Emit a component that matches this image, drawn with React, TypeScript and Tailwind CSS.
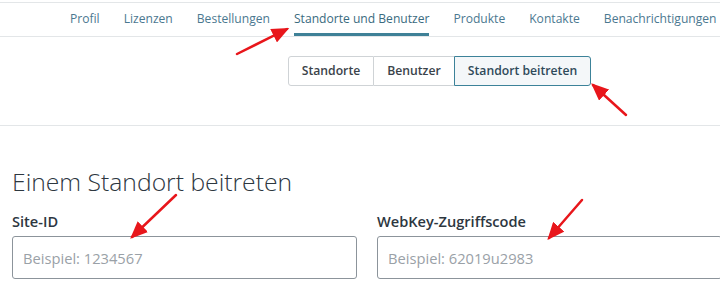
export default function App() {
  const tabs = ["Profil", "Lizenzen", "Bestellungen", "Standorte und Benutzer", "Produkte", "Kontakte", "Benachrichtigungen"]
  const active = "Standorte und Benutzer"

  return (
    <div className="relative w-[720px] h-[287px] overflow-hidden bg-white font-['Open_Sans',sans-serif] text-[#2d373f]">
      {/* Top tabs */}
      <nav className="mt-[2px] border-t border-b border-[#e3e6e8] flex pl-[70px] gap-[24px] h-[35px] whitespace-nowrap">
        {tabs.map((t) => (
          <div
            key={t}
            className={`flex items-center pt-[3px] text-[12.1px] border-b-[3px] ${
              t === active ? "border-[#3f8197] text-[#3a6b80]" : "border-transparent text-[#4b7890]"
            }`}
          >
            {t}
          </div>
        ))}
      </nav>

      {/* Segmented control */}
      <div className="pl-[288px] pt-[19px] pb-[39px] border-b border-[#e3e6e8]">
        <div className="flex h-[30px] text-[12.2px] font-semibold text-[#3a434a]">
          <button className="w-[86px] border border-[#cfd3d6] rounded-l-[3px] bg-white">Standorte</button>
          <button className="w-[80px] border-y border-[#cfd3d6] bg-white">Benutzer</button>
          <button className="w-[137px] border border-[#3c8299] rounded-r-[3px] bg-[#f4f7f9] text-[#2f4a5a]">
            Standort beitreten
          </button>
        </div>
      </div>

      {/* Form */}
      <div className="px-[12px] pt-[41px]">
        <h1 className="text-[24.7px] font-light leading-[30px] text-[#2d373f]">Einem Standort beitreten</h1>
        <div className="flex gap-[20px] mt-[14px]">
          <div className="w-[345px] shrink-0">
            <label className="block text-[14.6px] font-semibold text-[#2d373f] leading-[20px]">Site-ID</label>
            <input
              className="mt-[5px] w-full h-[43px] border border-[#8c949b] rounded-[3px] px-[10px] text-[14.7px] placeholder:text-[#9aa1a7] outline-none"
              placeholder="Beispiel: 1234567"
            />
          </div>
          <div className="w-[345px] shrink-0">
            <label className="block text-[14.6px] font-semibold text-[#2d373f] leading-[20px]">WebKey-Zugriffscode</label>
            <input
              className="mt-[5px] w-full h-[43px] border border-[#8c949b] rounded-[3px] px-[10px] text-[14.7px] placeholder:text-[#9aa1a7] outline-none"
              placeholder="Beispiel: 62019u2983"
            />
          </div>
        </div>
      </div>

      {/* Annotation arrows */}
      <svg className="absolute inset-0 pointer-events-none" width="720" height="287">
        <defs>
          <marker id="ah" markerWidth="7" markerHeight="6" refX="6" refY="3" orient="auto" markerUnits="strokeWidth">
            <path d="M0,0 L7,3 L0,6 Z" fill="#e8161b" />
          </marker>
        </defs>
        <g stroke="#e8161b" strokeWidth="2.5" strokeLinecap="round" markerEnd="url(#ah)">
          <line x1="237" y1="54" x2="287" y2="29" />
          <line x1="626" y1="115" x2="593" y2="85" />
          <line x1="176" y1="195" x2="132" y2="237" />
          <line x1="582" y1="200" x2="549" y2="238" />
        </g>
      </svg>
    </div>
  )
}
